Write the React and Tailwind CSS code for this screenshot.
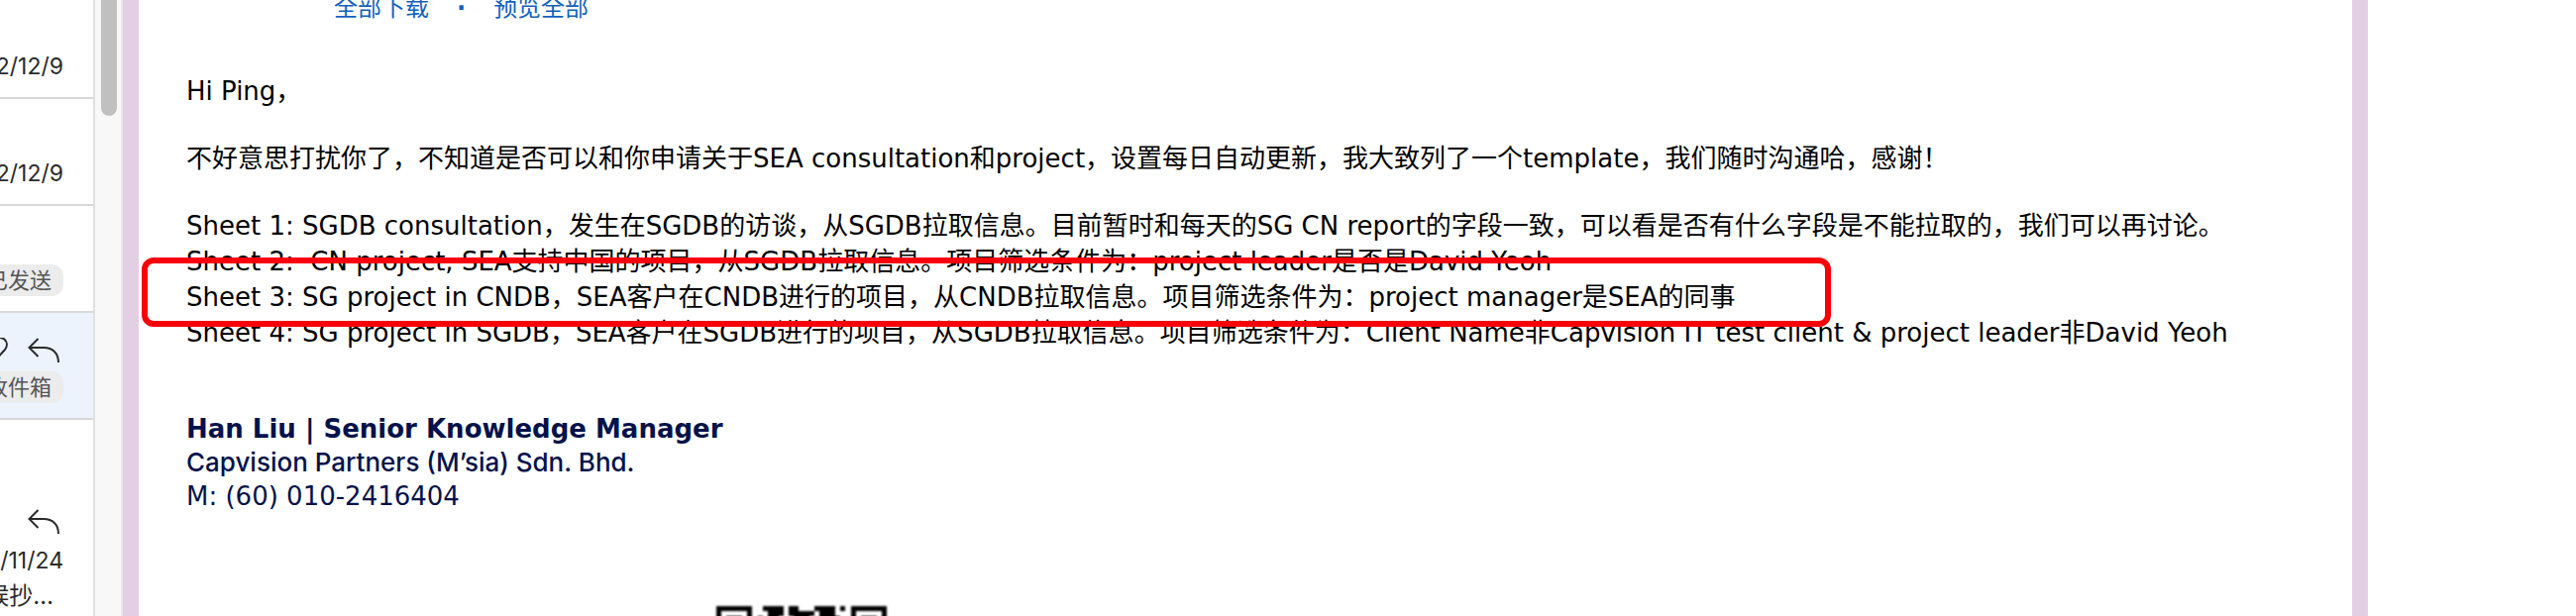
const QR_ROWS = [
  "111111100111101100011110101111111",
  "100000100011101111101110001000001",
  "101110101011000111001111001011101",
];

function ReplyIcon() {
  return (
    <svg width="32" height="26" viewBox="0 0 32 26" fill="none" stroke="#2a2a2a" strokeWidth="2">
      <path d="M10.500 1L1.500 10L10.500 19" />
      <path d="M1.500 10H16C25 10 31 15.500 31 25" />
    </svg>
  );
}

function HeartIcon() {
  return (
    <svg width="24" height="26" viewBox="0 0 24 26" fill="none" stroke="#2a2a2a" strokeWidth="2">
      <path d="M12 22L3 12C-1 6 7 -4 12 2C17 -4 27 4 21 12Z" />
    </svg>
  );
}

function Tag({ children }) {
  return (
    <span className="flex h-8 shrink-0 items-center rounded-xl bg-[#ececec] px-3 text-[22px] text-[#555]">
      {children}
    </span>
  );
}

function Row({ active, children }) {
  return (
    <li
      className={
        "flex h-[108px] flex-col items-end justify-end border-b-2 border-[#d8d8d8] pr-[30px] " +
        (active ? "bg-[#ecf3fc]" : "bg-white")
      }
    >
      {children}
    </li>
  );
}

function QrCode() {
  return (
    <svg className="ml-[535px] block h-[172px] w-[172px] blur-[1px]" viewBox="0 0 33 33" shapeRendering="crispEdges">
      {QR_ROWS.map((row, y) =>
        row.split("").map((cell, x) =>
          cell === "1" ? <rect key={x + "-" + y} x={x} y={y} width="1" height="1" fill="#000" /> : null
        )
      )}
    </svg>
  );
}

export default function App() {
  return (
    <div className="flex h-screen overflow-hidden bg-white font-['DejaVu_Sans','Noto_Sans_CJK_SC',sans-serif] text-black">
      <aside className="w-24 shrink-0 overflow-hidden border-r-2 border-[#e0e0e0] font-['Inter','Noto_Sans_CJK_SC',sans-serif]">
        <ul className="-mt-2 text-[23px] leading-8 whitespace-nowrap text-[#2a2a2a]">
          <Row><time className="pb-[15px]">2022/12/9</time></Row>
          <Row><time className="pb-[15px]">2022/12/9</time></Row>
          <Row><div className="pb-[15px]"><Tag>已发送</Tag></div></Row>
          <Row active>
            <div className="flex gap-5 pr-1 pb-2"><HeartIcon /><ReplyIcon /></div>
            <div className="pb-[15px]"><Tag>收件箱</Tag></div>
          </Row>
          <li className="flex flex-col items-end pt-[90px] pr-[30px]">
            <div className="pr-1"><ReplyIcon /></div>
            <time className="pt-2.5">2022/11/24</time>
            <p className="pt-1 pr-2.5 text-[24px]">等候抄…</p>
          </li>
        </ul>
      </aside>
      <div className="w-7 shrink-0 border-r-2 border-[#e8e8e8] bg-[#f8f8f8] pl-1.5">
        <div className="h-[117px] w-4 rounded-b-full bg-[#c0c0c0]" />
      </div>
      <main className="mr-[210px] min-w-0 flex-1 border-x-16 border-[#e2cfe3] bg-white">
        <nav className="-mt-2.5 flex gap-7 pl-[197px] text-[24px] leading-9 whitespace-nowrap text-[#1161bd]">
          <a href="#download">全部下载</a>
          <span className="font-bold">·</span>
          <a href="#preview">预览全部</a>
        </nav>
        <article className="pt-12 pl-12 text-[26px] leading-9 whitespace-nowrap">
          <p className="pb-8">Hi Ping，</p>
          <p className="pb-8">不好意思打扰你了，不知道是否可以和你申请关于SEA consultation和project，设置每日自动更新，我大致列了一个template，我们随时沟通哈，感谢！</p>
          <p>Sheet 1: SGDB consultation，发生在SGDB的访谈，从SGDB拉取信息。目前暂时和每天的SG CN report的字段一致，可以看是否有什么字段是不能拉取的，我们可以再讨论。</p>
          <p>Sheet 2:&nbsp; CN project, SEA支持中国的项目，从SGDB拉取信息。项目筛选条件为：project leader是否是David Yeoh</p>
          <div className="relative">
            <p>Sheet 3: SG project in CNDB，SEA客户在CNDB进行的项目，从CNDB拉取信息。项目筛选条件为：project manager是SEA的同事</p>
            <div className="absolute -top-[22px] -left-[45px] h-[70px] w-[1705px] rounded-xl border-6 border-[#f8000a]" />
          </div>
          <p>Sheet 4: SG project in SGDB，SEA客户在SGDB进行的项目，从SGDB拉取信息。项目筛选条件为：Client Name非Capvision IT test client &amp; project leader非David Yeoh</p>
          <footer className="pt-[62px] leading-[34px] text-[#03124a]">
            <p className="font-bold">Han Liu | Senior Knowledge Manager</p>
            <p className="font-['Inter',sans-serif] font-medium">Capvision Partners (M’sia) Sdn. Bhd.</p>
            <p>M: (60) 010-2416404</p>
          </footer>
          <div className="pt-[94px]"><QrCode /></div>
        </article>
      </main>
    </div>
  );
}
